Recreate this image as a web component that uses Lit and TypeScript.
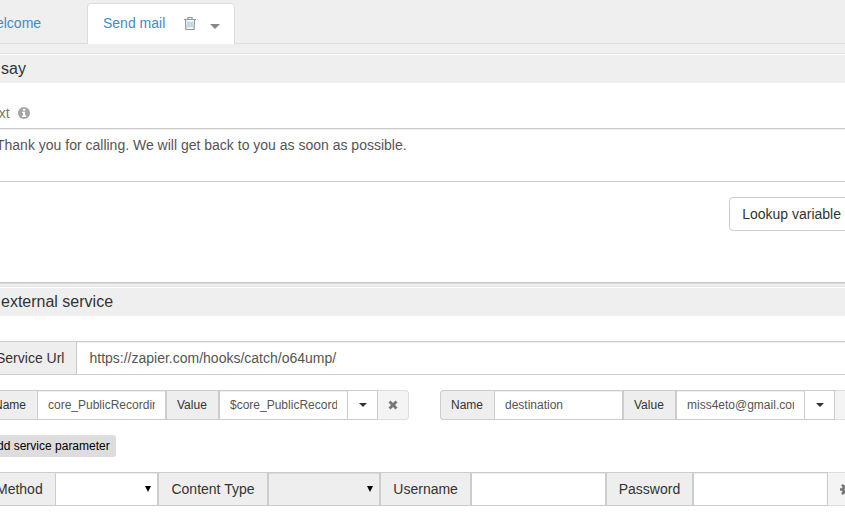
import { LitElement, html, css, svg } from "lit";
import { customElement, property } from "lit/decorators.js";

const trashIcon = svg`<svg class="trash" viewBox="0 0 12 13" aria-hidden="true">
  <path d="M0 2.500H12M4 2V.5H8V2M1.500 3L2 12.500H10L10.500 3" fill="none" stroke="#8f9799" stroke-width="1.200"/>
  <path d="M4 4.500V10.500M6 4.500V10.500M8 4.500V10.500" fill="none" stroke="#7fb9c6"/>
</svg>`;

const infoIcon = svg`<svg class="info" viewBox="0 0 12 12" role="img" aria-label="Info">
  <circle cx="6" cy="6" r="6" fill="#a5a5a5"/>
  <path d="M5 1.700H7.200V3.700H5ZM4 4.700H7.200V8.500H8.200V9.900H4V8.500H5V6H4Z" fill="#fff"/>
</svg>`;

const removeIcon = svg`<svg class="remove" viewBox="0 0 10 10" aria-hidden="true">
  <path d="M0.500 2.500L2.500 .5L5 3L7.500 .5L9.500 2.500L7 5L9.500 7.500L7.500 9.500L5 7L2.500 9.500L.5 7.500L3 5Z" fill="#777"/>
</svg>`;

const cogIcon = svg`<svg class="cog" viewBox="0 0 14 14" aria-hidden="true">
  <circle cx="7" cy="7" r="3.500" fill="none" stroke="#777" stroke-width="3"/>
  <path d="M7 0V3M7 11V14M0 7H3M11 7H14M2 2L4 4M10 10L12 12M2 12L4 10M10 4L12 2" stroke="#777" stroke-width="2.600"/>
</svg>`;

const controls = css`
  * { box-sizing: border-box; }
  .group { display: flex; }
  .addon, .field, .btn {
    height: 34px;
    font: 14px/20px "Liberation Sans", Arial, sans-serif;
    border: 1px solid #ccc;
    border-radius: 0;
    margin: 0;
  }
  .addon { flex: none; padding: 6px 12px; background: #eee; color: #333; white-space: nowrap; }
  .addon.first { border-right: 0; border-radius: 4px 0 0 4px; }
  .field {
    flex: 1 1 0;
    min-width: 0;
    padding: 6px 12px;
    background: #fff;
    color: #555;
    box-shadow: inset 0 1px 1px rgba(0, 0, 0, 0.075);
    outline: none;
  }
  .btn {
    flex: none;
    display: flex;
    align-items: center;
    justify-content: center;
    padding: 6px 12px;
    background: #fff;
    color: #333;
  }
  .btn.last { border-left: 0; border-radius: 0 4px 4px 0; background: #f4f4f4; border-color: #ddd; }
  .caret { width: 0; height: 0; border: 4px solid transparent; border-top-color: currentColor; border-bottom: 0; }
`;

@customElement("service-parameter")
export class ServiceParameter extends LitElement {
  @property() name = "";
  @property() value = "";

  static styles = [controls, css`
    :host { display: block; min-width: 0; }
    .addon, .field, .btn { height: 30px; font-size: 12px; line-height: 18px; padding: 5px 10px; }
    .addon.first { width: 54px; }
    .value { width: 53px; }
    .btn { width: 30px; padding: 0; border-left: 0; }
    .btn.last { width: 31px; }
    .remove { width: 10px; height: 10px; }
  `];

  render() {
    return html`<div class="group">
      <label class="addon first" for="name">Name</label>
      <input class="field" id="name" .value=${this.name}>
      <label class="addon value" for="value">Value</label>
      <input class="field" id="value" .value=${this.value}>
      <button class="btn" aria-label="Choose variable"><span class="caret"></span></button>
      <button class="btn last" aria-label="Remove parameter">${removeIcon}</button>
    </div>`;
  }
}

@customElement("app-root")
export class AppRoot extends LitElement {
  static styles = [controls, css`
    :host {
      display: block;
      overflow: hidden;
      background: #fff;
      color: #333;
      font: 14px/20px "Liberation Sans", Arial, sans-serif;
    }
    .tabs { display: flex; background: #efefef; border-bottom: 1px solid #ddd; padding-top: 3px; }
    .tab {
      display: flex;
      align-items: center;
      height: 41px;
      margin: 0 2px -1px 0;
      padding: 0 14px 2px 15px;
      border: 1px solid transparent;
      border-bottom: 0;
      border-radius: 4px 4px 0 0;
    }
    .tab.welcome { width: 118px; margin-left: -33px; }
    .tab.active { background: #fff; border-color: #ddd; }
    .tab a { color: #428bca; text-decoration: none; white-space: nowrap; }
    .icon { display: flex; padding: 0; border: 0; background: none; color: #888; }
    .trash { width: 12px; height: 13px; margin-left: 19px; }
    .icon .caret { margin: 6px 0 0 14px; border-width: 5px 5px 0; }
    .gap { height: 9px; background: #efefef; }
    .gap.shadow { height: 4px; border-top: 1px solid #c8c8c8; box-shadow: inset 0 1px #ddd; }
    .heading {
      margin: 0;
      border-top: 1px solid #e4e4e4;
      box-shadow: inset 0 1px #fff;
      padding: 2px 1px 0;
      height: 30px;
      background: #efefef;
      font-size: 16px;
      font-weight: 400;
      line-height: 26px;
    }
    .body { display: flow-root; margin: 0 -21px 0 -17px; }
    .caption { display: flex; align-items: center; gap: 8px; margin: 20px 0 5px 1px; color: #777; }
    .info { width: 12px; height: 12px; }
    .message { display: block; width: 100%; height: 54px; resize: none; border-radius: 4px; }
    .lookup { gap: 4px; margin: 15px 0 51px auto; border-radius: 4px; }
    .url { margin: 25px 0 15px; }
    .parameters { display: grid; grid-template-columns: 1fr 1fr; gap: 31px; }
    .add {
      display: block;
      height: 22px;
      margin: 15px 0;
      padding: 0 6px;
      border: 0;
      border-radius: 3px;
      background: #ddd;
      color: #000;
      font: 12px/22px "Liberation Sans", Arial, sans-serif;
    }
    select.field { appearance: none; }
    .pick { display: grid; align-items: center; min-width: 0; }
    .pick .field, .arrow { grid-area: 1 / 1; }
    .pick .field { width: 100%; }
    .arrow {
      justify-self: end;
      margin-right: 7px;
      border: 3px solid transparent;
      border-top: 6px solid #000;
      border-bottom: 0;
      pointer-events: none;
    }
    .method { flex: 103 1 0; }
    .type { flex: 112 1 0; }
    .type .field { background: #eee; }
    .login { flex: 108 1 0; }
    .options { width: 38px; }
    .cog { flex: none; width: 13px; height: 13px; }
  `];

  render() {
    return html`
      <nav class="tabs">
        <div class="tab welcome"><a href="#welcome">Welcome</a></div>
        <div class="tab active">
          <a href="#send-mail">Send mail</a>
          <button class="icon" aria-label="Delete">${trashIcon}</button>
          <button class="icon" aria-label="More"><span class="caret"></span></button>
        </div>
      </nav>
      <div class="gap"></div>
      <section>
        <h2 class="heading">say</h2>
        <div class="body">
          <div class="caption"><label for="message">Text</label>${infoIcon}</div>
          <textarea class="field message" id="message" .value=${"Thank you for calling. We will get back to you as soon as possible."}></textarea>
          <button class="btn lookup">Lookup variable <span class="caret"></span></button>
        </div>
      </section>
      <div class="gap shadow"></div>
      <section>
        <h2 class="heading">external service</h2>
        <div class="body">
          <div class="group url">
            <label class="addon first" for="url">Service Url</label>
            <input class="field" id="url" .value=${"https://zapier.com/hooks/catch/o64ump/"}>
          </div>
          <div class="parameters">
            <service-parameter name="core_PublicRecordingUrl" value="$core_PublicRecordingUrl"></service-parameter>
            <service-parameter name="destination" value="miss4eto@gmail.com"></service-parameter>
          </div>
          <button class="add">Add service parameter</button>
          <div class="group">
            <label class="addon first" for="method">Method</label>
            <div class="pick method"><select class="field" id="method"><option></option></select><span class="arrow"></span></div>
            <label class="addon" for="type">Content Type</label>
            <div class="pick type"><select class="field" id="type"><option></option></select><span class="arrow"></span></div>
            <label class="addon" for="username">Username</label>
            <input class="field login" id="username">
            <label class="addon" for="password">Password</label>
            <input class="field login" id="password" type="password">
            <button class="btn last options" aria-label="Options">${cogIcon}</button>
          </div>
        </div>
      </section>`;
  }
}
